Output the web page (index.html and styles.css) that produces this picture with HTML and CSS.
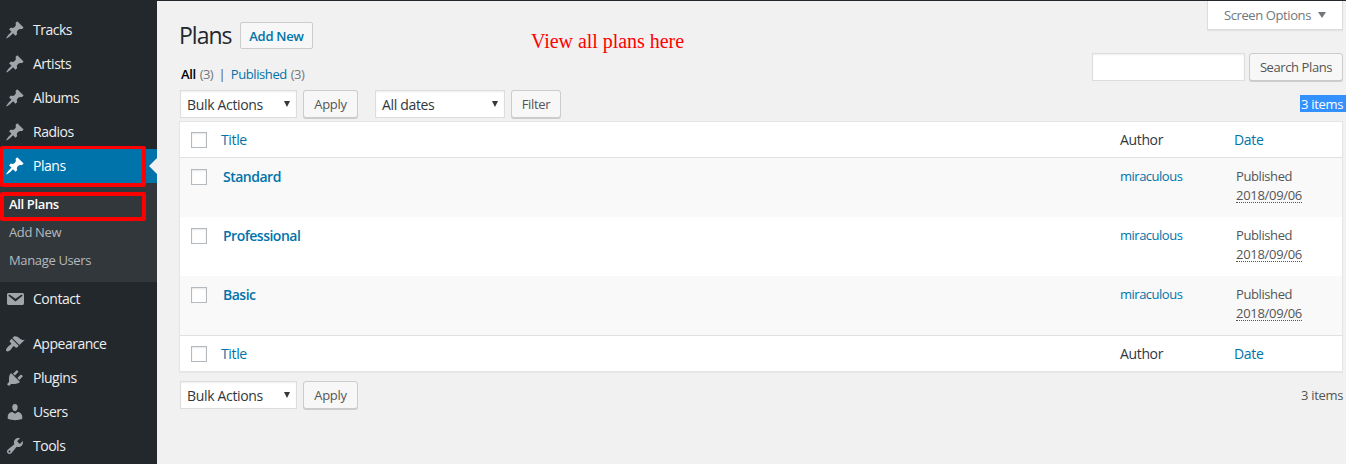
FILE: index.html
```html
<!DOCTYPE html>
<html lang="en">
<head>
<meta charset="utf-8">
<title>Plans</title>
<link rel="stylesheet" href="styles.css">
</head>
<body>
<svg class="defs" width="0" height="0" aria-hidden="true">
  <symbol id="pin" viewBox="0 0 20 20"><path d="M10.44 3.02l1.82-1.82 6.36 6.35-1.83 1.82c-1.05-.68-2.48-.57-3.41.36l-.75.75c-.92.93-1.04 2.35-.35 3.41l-1.83 1.82-2.41-2.41-2.8 2.79c-.42.42-3.38 2.71-3.8 2.29s1.86-3.39 2.28-3.81l2.79-2.79L4.1 9.36l1.83-1.82c1.05.69 2.48.57 3.4-.36l.75-.75c.93-.92 1.05-2.35.36-3.41z"/></symbol>
  <symbol id="mail" viewBox="0 0 20 20"><path d="M3.87 4h13.25C18.37 4 19 4.59 19 5.79v8.42c0 1.19-.63 1.79-1.88 1.79H3.87c-1.25 0-1.88-.6-1.88-1.79V5.79c0-1.2.63-1.79 1.88-1.79zm6.62 8.6l6.74-5.53c.24-.2.43-.66.13-1.07-.29-.41-.82-.42-1.17-.17l-5.7 3.86L4.8 5.83c-.35-.25-.88-.24-1.17.17-.3.41-.11.87.13 1.07z"/></symbol>
  <symbol id="brush" viewBox="0 0 20 20"><path d="M14.48 11.06L7.41 3.99l1.5-1.5c.5-.56 2.3-.47 3.51.32 1.21.8 1.43 1.28 2.91 2.1 1.18.64 2.45 1.26 4.45.85zm-.71.71L6.7 4.7 4.93 6.47c-.39.39-.39 1.02 0 1.41l1.06 1.06c.39.39.39 1.03 0 1.42-.6.6-1.43 1.11-2.21 1.69-.35.26-.7.53-1.01.84C1.43 14.23.4 16.08 1.4 17.07c.99 1 2.84-.03 4.18-1.36.31-.31.58-.66.85-1.02.57-.78 1.08-1.61 1.69-2.21.39-.39 1.02-.39 1.41 0l1.06 1.06c.39.39 1.02.39 1.41 0z"/></symbol>
  <symbol id="plug" viewBox="0 0 20 20"><path d="M13.11 4.36L9.87 7.6 8 5.73l3.24-3.24c.35-.34 1.05-.2 1.56.32.52.51.66 1.21.31 1.55zm-8 1.77l.91-1.12 9.01 9.01-1.19.84c-.71.71-2.63 1.16-3.82 1.16H6.14L4.9 17.26c-.59.59-1.54.59-2.12 0-.59-.58-.59-1.53 0-2.12l1.24-1.24v-3.88c0-1.13.4-3.19 1.09-3.89zm7.26 3.97l3.24-3.24c.34-.35 1.04-.21 1.55.31.52.51.66 1.21.31 1.55l-3.24 3.25z"/></symbol>
  <symbol id="user" viewBox="0 0 20 20"><path d="M10 9.25c-2.27 0-2.73-3.44-2.73-3.44C7 4.02 7.82 2 9.97 2c2.16 0 2.98 2.02 2.71 3.81 0 0-.41 3.44-2.68 3.44zm0 2.57L12.72 10c2.39 0 4.52 2.33 4.52 4.53v2.49s-3.65 1.13-7.24 1.13c-3.65 0-7.24-1.13-7.24-1.13v-2.49c0-2.25 1.94-4.48 4.47-4.48z"/></symbol>
  <symbol id="wrench" viewBox="0 0 20 20"><path d="M16.68 9.77c-1.34 1.34-3.3 1.67-4.95.99l-5.41 6.52c-.99.99-2.59.99-3.58 0s-.99-2.59 0-3.57l6.52-5.42c-.68-1.65-.35-3.61.99-4.95 1.28-1.28 3.12-1.62 4.72-1.06l-2.89 2.89 2.82 2.82 2.86-2.87c.53 1.58.18 3.39-1.08 4.65zM3.81 16.21c.4.39 1.04.39 1.43 0 .4-.4.4-1.04 0-1.43-.39-.4-1.03-.4-1.43 0-.39.39-.39 1.03 0 1.43z"/></symbol>
</svg>
<div class="app">
  <nav class="menu">
    <a class="item"><svg><use href="#pin"/></svg><span>Tracks</span></a>
    <a class="item"><svg><use href="#pin"/></svg><span>Artists</span></a>
    <a class="item"><svg><use href="#pin"/></svg><span>Albums</span></a>
    <a class="item"><svg><use href="#pin"/></svg><span>Radios</span></a>
    <a class="item current"><svg><use href="#pin"/></svg><span>Plans</span></a>
    <div class="submenu">
      <a class="active"><span>All Plans</span></a>
      <a><span>Add New</span></a>
      <a><span>Manage Users</span></a>
    </div>
    <a class="item"><svg><use href="#mail"/></svg><span>Contact</span></a>
    <div class="separator"></div>
    <a class="item"><svg><use href="#brush"/></svg><span>Appearance</span></a>
    <a class="item"><svg><use href="#plug"/></svg><span>Plugins</span></a>
    <a class="item"><svg><use href="#user"/></svg><span>Users</span></a>
    <a class="item"><svg><use href="#wrench"/></svg><span>Tools</span></a>
    <i class="mark mark-plans"></i>
    <i class="mark mark-all"></i>
  </nav>
  <main class="main">
    <header class="head">
      <div class="head-left">
        <div class="title-row"><h1>Plans</h1><a class="add-new">Add New</a></div>
        <div class="views"><b>All</b><span class="count">(3)</span><span class="bar">|</span><a class="pub">Published</a><span class="count">(3)</span></div>
      </div>
      <div class="head-right">
        <div class="screen-options"><span>Screen Options</span><i class="tri"></i></div>
        <div class="search"><div class="field"></div><div class="button w-search">Search Plans</div></div>
      </div>
      <p class="note">View all plans here</p>
    </header>
    <div class="tablenav">
      <div class="select bulk"><span>Bulk Actions</span><i class="arrow"></i></div>
      <div class="button w-apply">Apply</div>
      <div class="select dates"><span>All dates</span><i class="arrow"></i></div>
      <div class="button w-filter">Filter</div>
      <span class="items selected">3 items</span>
    </div>
    <section class="table">
      <div class="row labels"><i class="check"></i><a class="c-title">Title</a><span class="c-author">Author</span><a class="c-date">Date</a></div>
      <div class="row plan odd"><i class="check"></i><a class="c-title">Standard</a><a class="c-author">miraculous</a><div class="c-date"><span>Published</span><br><abbr>2018/09/06</abbr></div></div>
      <div class="row plan"><i class="check"></i><a class="c-title">Professional</a><a class="c-author">miraculous</a><div class="c-date"><span>Published</span><br><abbr>2018/09/06</abbr></div></div>
      <div class="row plan odd"><i class="check"></i><a class="c-title">Basic</a><a class="c-author">miraculous</a><div class="c-date"><span>Published</span><br><abbr>2018/09/06</abbr></div></div>
      <div class="row labels foot"><i class="check"></i><a class="c-title">Title</a><span class="c-author">Author</span><a class="c-date">Date</a></div>
    </section>
    <div class="tablenav bottom">
      <div class="select bulk"><span>Bulk Actions</span><i class="arrow"></i></div>
      <div class="button w-apply">Apply</div>
      <span class="items">3 items</span>
    </div>
  </main>
</div>
</body>
</html>
```
FILE: styles.css
```css
* { box-sizing: border-box; }
body { margin: 0; background: #f1f1f1; color: #555; font: 13px/20px "Open Sans", "Noto Sans", sans-serif; letter-spacing: -0.4px; overflow: hidden; }
a { color: #0073aa; }
.defs { position: absolute; }
.app { display: flex; width: 1346px; height: 464px; }

/* Side menu */
.menu { position: relative; width: 157px; flex: none; padding-top: 13px; background: #23282d; }
.item { display: flex; align-items: center; height: 34px; padding-left: 5px; color: #eee; font-size: 14px; letter-spacing: -0.48px; }
.item svg { width: 20px; height: 20px; margin-right: 8px; fill: #a0a5aa; }
.current { position: relative; background: #0073aa; color: #fff; }
.current svg { fill: #fff; }
.current::after { content: ""; position: absolute; right: 0; top: 9px; border: 8px solid transparent; border-left: 0; border-right-color: #f1f1f1; }
.submenu { height: 99px; padding: 7px 9px; background: #32373c; }
.submenu a { display: flex; align-items: center; height: 28px; color: #b4b9be; letter-spacing: -0.35px; }
.submenu .active { color: #fff; font-weight: 600; letter-spacing: -0.35px; }
.separator { height: 11px; }
.mark { position: absolute; left: 0; width: 146px; border: 4px solid #f00; border-left-width: 3px; border-radius: 2px; }
.mark-plans { top: 146px; height: 41px; border-top-width: 3px; }
.mark-all { top: 192px; height: 29px; border-left-width: 4px; }

/* Page head */
.main { flex: 1; border-top: 1px solid #23282d; padding-left: 22px; }
.head { position: relative; display: flex; justify-content: space-between; height: 89px; padding-right: 3px; }
.head-left { padding: 21px 0 0 1px; }
.title-row { display: flex; align-items: center; height: 27px; }
h1 { margin: 0 0 0 -1px; width: 61px; color: #23282d; font-size: 23px; line-height: 27px; font-weight: 400; letter-spacing: -1px; }
.add-new { width: 73px; height: 27px; border: 1px solid #ccc; border-radius: 2px; background: #f7f7f7; font-weight: 600; line-height: 26px; text-align: center; letter-spacing: -0.3px; }
.views { display: flex; padding: 15px 0 0 1px; }
.views b { color: #000; font-weight: 600; margin-right: 4px; }
.bar { margin: 0 5.5px; }
.pub { margin-right: 4px; }
.views .count { color: #72777c; letter-spacing: -0.6px; }
.head-right { display: flex; flex-direction: column; align-items: flex-end; }
.screen-options { display: flex; align-items: center; width: 136px; height: 29px; padding-left: 16px; border: 1px solid #ddd; border-top: 0; background: #fff; color: #72777c; box-shadow: 0 1px 1px rgba(0,0,0,.06); }
.tri { margin-left: 7px; border: 4px solid transparent; border-top: 6px solid #72777c; border-bottom: 0; }
.search { display: flex; gap: 4px; margin-top: 23px; }
.field { width: 153px; height: 28px; border: 1px solid #ddd; background: #fff; box-shadow: inset 0 1px 2px rgba(0,0,0,.07); }
.note { position: absolute; left: 352px; top: 28px; margin: 0; color: #f00; font: 20px/24px "Liberation Serif", serif; letter-spacing: -0.04px; white-space: nowrap; }

/* Controls */
.button { height: 28px; border: 1px solid #ccc; border-radius: 3px; background: #f7f7f7; box-shadow: 0 1px 0 #ccc; line-height: 26px; text-align: center; white-space: nowrap; letter-spacing: -0.3px; }
.w-search { width: 94px; letter-spacing: -0.4px; }
.w-apply { width: 55px; }
.w-filter { width: 50px; }
.tablenav { display: flex; height: 31px; padding-left: 1px; }
.select { display: flex; align-items: center; justify-content: space-between; height: 28px; padding: 0 6px; border: 1px solid #ddd; background: #fff; box-shadow: inset 0 1px 2px rgba(0,0,0,.07); color: #32373c; font-size: 14px; letter-spacing: -0.33px; }
.select span { position: relative; top: 1px; white-space: nowrap; }
.bulk { width: 117px; margin-right: 6px; }
.dates { width: 130px; margin: 0 6px 0 17px; }
.arrow { border: 3.5px solid transparent; border-top: 6px solid #32373c; border-bottom: 0; }
.items { margin-left: auto; margin-right: 3px; height: 17px; line-height: 17px; margin-top: 5px; letter-spacing: -0.33px; }
.selected { margin-right: 0; padding: 1px 3px 0 1px; line-height: 16px; background: #3390ff; color: #fff; }
.bottom { margin-top: 9px; }
.bottom .items { margin-top: 6px; }

/* Plans table */
.table { width: 1164px; height: 251px; border: 1px solid #e5e5e5; background: #fff; box-shadow: 0 1px 1px rgba(0,0,0,.04); }
.row { display: grid; grid-template-columns: 41px 899px 114px 1fr; height: 59px; }
.check { width: 16px; height: 16px; margin: 11px 0 0 11px; border: 1px solid #b4b9be; background: #fff; box-shadow: inset 0 1px 2px rgba(0,0,0,.1); }
.labels { height: 36px; border-bottom: 1px solid #e1e1e1; font-size: 14px; letter-spacing: -0.35px; }
.labels > :not(.check) { line-height: 36px; }
.labels .check { margin-top: 10px; }
.labels .c-author { color: #32373c; }
.foot { border-top: 1px solid #e1e1e1; border-bottom: 0; }
.odd { background: #f9f9f9; }
.plan > :not(.check) { padding-top: 9px; }
.plan .c-title { padding-left: 2px; font-size: 14px; line-height: 19px; font-weight: 600; letter-spacing: -0.5px; }
.plan .c-date { padding-left: 2px; line-height: 19px; }
.plan .c-author { line-height: 19px; letter-spacing: -0.5px; }
abbr { letter-spacing: -0.3px; text-decoration: none; display: inline-block; height: 17px; line-height: 19px; border-bottom: 1px dotted #555; }
```
